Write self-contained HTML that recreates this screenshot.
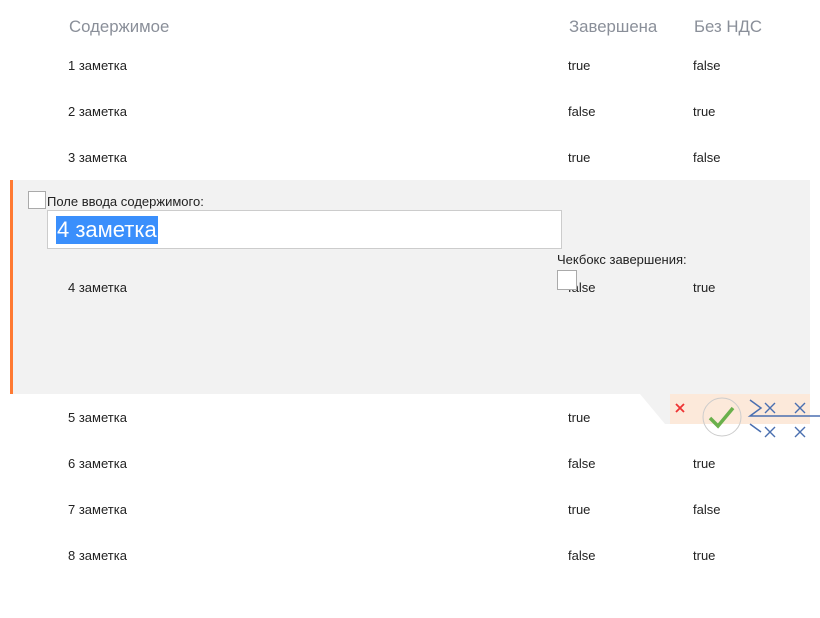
<!DOCTYPE html>
<html><head><meta charset="utf-8"><style>
body{margin:0;width:820px;height:618px;background:#fff;font-family:"Liberation Sans","DejaVu Sans",sans-serif;position:relative;overflow:hidden;color:#222}
.a{position:absolute;white-space:nowrap;font-size:13px}
.h{position:absolute;font-size:16.8px;color:#8a8f99}
</style></head><body>
<div class="h" style="left:69px;top:17px">Содержимое</div>
<div class="h" style="left:569px;top:17px">Завершена</div>
<div class="h" style="left:694px;top:17px">Без НДС</div>

<div class="a" style="left:68px;top:58px">1 заметка</div><div class="a" style="left:568px;top:58px">true</div><div class="a" style="left:693px;top:58px">false</div>
<div class="a" style="left:68px;top:104px">2 заметка</div><div class="a" style="left:568px;top:104px">false</div><div class="a" style="left:693px;top:104px">true</div>
<div class="a" style="left:68px;top:150px">3 заметка</div><div class="a" style="left:568px;top:150px">true</div><div class="a" style="left:693px;top:150px">false</div>

<div style="position:absolute;left:10px;top:180px;width:800px;height:214px;background:#f2f2f2;border-left:3px solid #ff7a33;box-sizing:border-box"></div>
<svg style="position:absolute;left:640px;top:394px" width="180" height="32"><polygon points="0,0 170,0 170,30 25,30" fill="#f2f2f2"/><rect x="30" y="0" width="140" height="30" fill="#fce9da"/></svg>
<div style="position:absolute;left:28px;top:191px;width:18px;height:18px;background:#fff;border:1px solid #aaa;box-sizing:border-box"></div>
<div class="a" style="left:47px;top:194px">Поле ввода содержимого:</div>
<div style="position:absolute;left:47px;top:210px;width:515px;height:39px;background:#fff;border:1px solid #ccc;box-sizing:border-box"></div>
<div style="position:absolute;left:56px;top:216px;height:28px;background:#3a8ffc;color:#fff;font-size:22px;line-height:28px;padding:0 1px">4 заметка</div>
<div class="a" style="left:557px;top:252px">Чекбокс завершения:</div>
<div class="a" style="left:68px;top:280px">4 заметка</div><div class="a" style="left:568px;top:280px">false</div><div class="a" style="left:693px;top:280px">true</div>
<div style="position:absolute;left:557px;top:270px;width:20px;height:20px;background:#fff;border:1px solid #aaa;box-sizing:border-box"></div>

<svg style="position:absolute;left:670px;top:394px" width="150" height="50" viewBox="0 0 150 50">
<path d="M6,10 L14,18 M14,10 L6,18" stroke="#e33" stroke-width="1.8"/>
<circle cx="52" cy="23" r="19" fill="none" stroke="#ccc"/>
<path d="M40,24 L48,32 L63,14" stroke="#6ab04c" stroke-width="3.5" fill="none"/>
<path d="M80,6 L91,14 L80,22 L150,22 M80,30 L91,38" stroke="#4a6fb0" stroke-width="1.5" fill="none"/>
<path d="M95,9 L105,19 M105,9 L95,19 M125,9 L135,19 M135,9 L125,19 M95,33 L105,43 M105,33 L95,43 M125,33 L135,43 M135,33 L125,43" stroke="#4a6fb0" stroke-width="1.4"/>
</svg>

<div class="a" style="left:68px;top:410px">5 заметка</div><div class="a" style="left:568px;top:410px">true</div>
<div class="a" style="left:68px;top:456px">6 заметка</div><div class="a" style="left:568px;top:456px">false</div><div class="a" style="left:693px;top:456px">true</div>
<div class="a" style="left:68px;top:502px">7 заметка</div><div class="a" style="left:568px;top:502px">true</div><div class="a" style="left:693px;top:502px">false</div>
<div class="a" style="left:68px;top:548px">8 заметка</div><div class="a" style="left:568px;top:548px">false</div><div class="a" style="left:693px;top:548px">true</div>
</body></html>
